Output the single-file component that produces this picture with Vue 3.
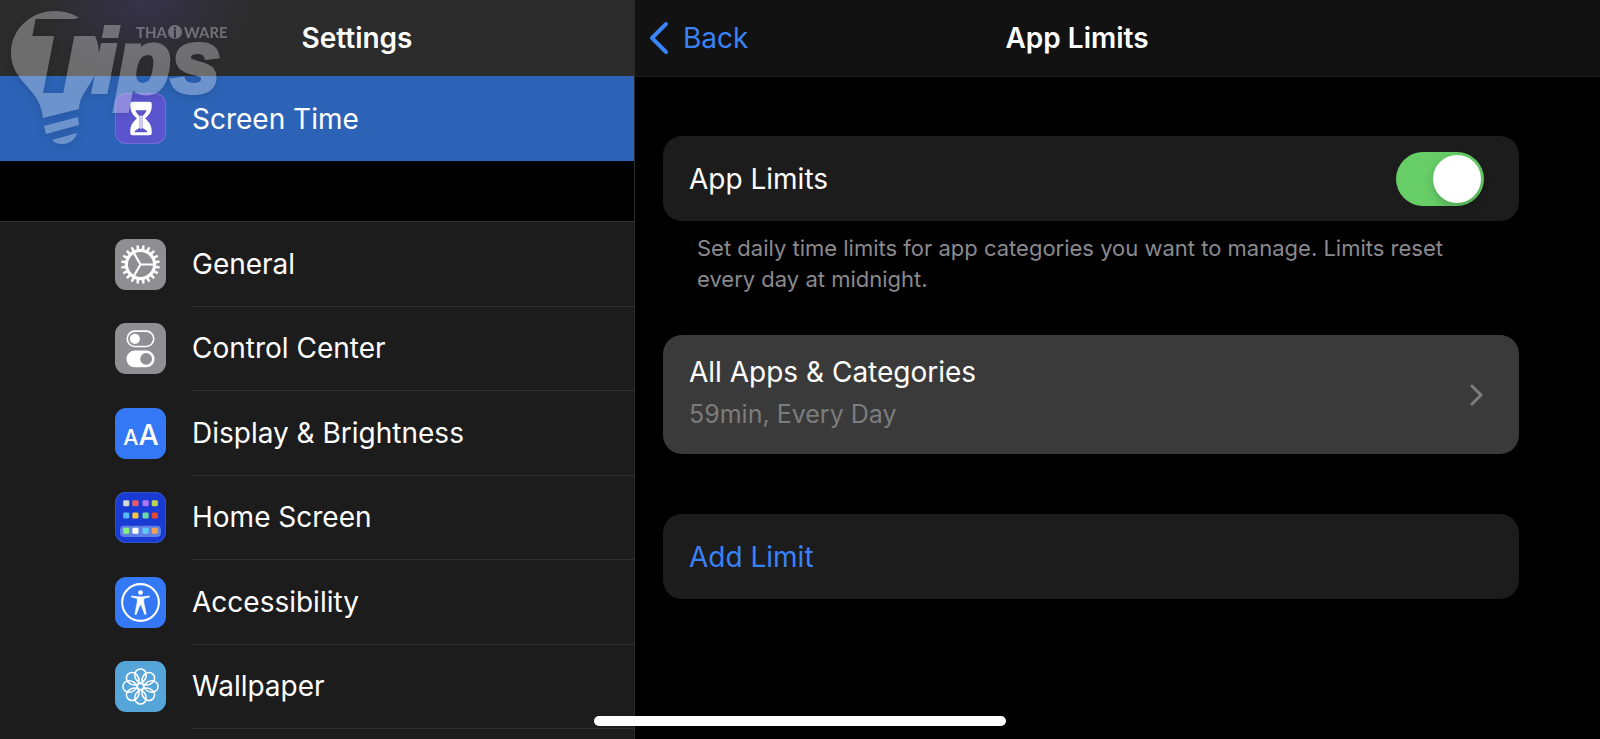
<script setup>
import { ref } from 'vue'

const limitsOn = ref(true)

const items = [
  { id: 'general', label: 'General', tone: 'grey' },
  { id: 'control', label: 'Control Center', tone: 'grey' },
  { id: 'display', label: 'Display & Brightness', tone: 'blue' },
  { id: 'home', label: 'Home Screen', tone: 'navy' },
  { id: 'access', label: 'Accessibility', tone: 'blue' },
  { id: 'wallpaper', label: 'Wallpaper', tone: 'sky' },
]

const teeth = Array.from({ length: 20 }, (_, i) => i * 18 + 9)
const petals = Array.from({ length: 8 }, (_, i) => i * 45)

const tiles = [
  ['#d5d5d3', '#ee5b63', '#b173f2', '#b9d350'],
  ['#56b9f3', '#f8c342', '#6fd9a8', '#ea4631'],
  ['#86ee7c', '#ffffff', '#5dcaf8', '#f2a04e'],
]
const tileRows = [8, 20, 35]
const tileCols = [8, 17, 27, 36]
</script>

<template>
  <div class="screen">
    <aside class="sidebar">
      <header class="bar side-bar">
        <h1 class="title">Settings</h1>
      </header>

      <nav class="menu" aria-label="Settings">
        <a class="row selected" href="#screen-time" aria-current="page">
          <span class="icon violet">
            <svg viewBox="0 0 50 50" aria-hidden="true">
              <path fill="#fff" d="M17 8.500h17a2 2 0 0 1 2 2v2c0 6-2.500 9-6.500 12.500 4 3.500 6.500 6.500 6.500 12.500v2a2 2 0 0 1-2 2H17a2 2 0 0 1-2-2v-2c0-6 2.500-9 6.500-12.500C17.500 21.500 15 18.500 15 12.500v-2a2 2 0 0 1 2-2z" />
              <path fill="#5a55cf" d="M20 17h11c-.8 2.600-2.300 4-4.200 5.800v11.200c1.200 1.600 4 1.500 5.200 4.500H19c1.200-3 4-2.900 5.200-4.500V22.800C22.300 21 20.800 19.600 20 17z" />
              <path stroke="#fff" stroke-width="1.400" d="M25.500 22v13" />
            </svg>
          </span>
          <span class="label">Screen Time</span>
        </a>

        <div class="gap"></div>

        <ul class="list">
          <li v-for="item in items" :key="item.id">
            <a class="row" :href="'#' + item.id">
              <span class="icon" :class="item.tone">
                <svg v-if="item.id === 'general'" viewBox="0 0 50 50" fill="none" stroke="#fff" aria-hidden="true">
                  <circle cx="25" cy="25" r="13.800" stroke-width="3" />
                  <path v-for="a in teeth" :key="a" d="M24 11l.4-4.500h1.200l.4 4.500z" fill="#fff" stroke-width="1" stroke-linejoin="round" :transform="`rotate(${a} 25 25)`" />
                  <path stroke-width="2.200" d="M25 25h13M25 25l-6.500-11.300M25 25l-6.500 11.300" />
                </svg>

                <svg v-else-if="item.id === 'control'" viewBox="0 0 50 50" aria-hidden="true">
                  <rect x="12" y="8" width="26" height="15" rx="7.500" fill="none" stroke="#fff" stroke-width="1.600" />
                  <circle cx="19.500" cy="15.500" r="5" fill="#fff" />
                  <rect x="11.200" y="27" width="27.600" height="16.500" rx="8.250" fill="#fff" />
                  <circle cx="30.500" cy="35.200" r="5.800" fill="#8e8e93" />
                </svg>

                <svg v-else-if="item.id === 'display'" viewBox="0 0 50 50" fill="#fff" aria-hidden="true">
                  <text class="aa" x="8" y="36" font-size="21">A</text>
                  <text class="aa" x="23" y="36" font-size="28">A</text>
                </svg>

                <svg v-else-if="item.id === 'home'" viewBox="0 0 50 50" aria-hidden="true">
                  <rect x="5" y="33" width="40" height="11" rx="3.500" fill="#6180e6" />
                  <template v-for="(line, r) in tiles" :key="r">
                    <rect v-for="(c, i) in line" :key="i" :x="tileCols[i]" :y="tileRows[r]" width="6" height="6" rx="1.300" :fill="c" />
                  </template>
                </svg>

                <svg v-else-if="item.id === 'access'" viewBox="0 0 50 50" aria-hidden="true">
                  <circle cx="25" cy="25" r="18" fill="none" stroke="#fff" stroke-width="2" />
                  <circle cx="25" cy="15.300" r="2.400" fill="#fff" />
                  <path fill="#fff" stroke="#fff" stroke-width=".6" stroke-linejoin="round" d="M16.200 18.600l6 .8h5.600l6-.8v1.100l-5.600 1.300c-.3 3 .2 5 .8 7.500l1.500 8-1.300.3-3.600-9.300h-1.200l-3.600 9.300-1.300-.3 1.500-8c.6-2.500 1.100-4.500.8-7.500l-5.600-1.300z" />
                </svg>

                <svg v-else viewBox="0 0 50 50" fill="none" stroke="#fff" stroke-width="1.500" aria-hidden="true">
                  <path v-for="a in petals" :key="a" d="M25 22c-3-1.500-5.600-5-5.600-8.600a5.600 5.600 0 0 1 11.200 0c0 3.600-2.600 7.100-5.600 8.600z" :transform="`rotate(${a} 25 25)`" />
                  <circle cx="25" cy="25" r="3.200" />
                </svg>
              </span>
              <span class="label">{{ item.label }}</span>
            </a>
          </li>
        </ul>
      </nav>
    </aside>

    <main class="detail">
      <header class="bar detail-bar">
        <button class="back" type="button">
          <svg viewBox="0 0 20 34" aria-hidden="true">
            <path d="M17 3L3 17l14 14" fill="none" stroke="#3a82f7" stroke-width="4" stroke-linecap="round" stroke-linejoin="round" />
          </svg>
          Back
        </button>
        <h2 class="title">App Limits</h2>
      </header>

      <div class="content">
        <section class="group">
          <label class="card toggle-card">
            <span>App Limits</span>
            <input v-model="limitsOn" class="switch" type="checkbox" role="switch" />
          </label>
          <p class="note">Set daily time limits for app categories you want to manage. Limits reset every day at midnight.</p>
        </section>

        <button class="card limit-card" type="button">
          <span class="limit-text">
            <span>All Apps &amp; Categories</span>
            <span class="sub">59min, Every Day</span>
          </span>
          <svg class="chevron" viewBox="0 0 14 22" aria-hidden="true">
            <path d="M2 2l9 9-9 9" fill="none" stroke="#7d7d80" stroke-width="3" stroke-linecap="round" stroke-linejoin="round" />
          </svg>
        </button>

        <button class="card add-card" type="button">Add Limit</button>
      </div>
    </main>

    <svg class="watermark" viewBox="0 0 240 150" role="img" aria-label="Thaiware Tips">
      <defs>
        <mask id="bulb-cut" maskUnits="userSpaceOnUse" x="0" y="0" width="240" height="150">
          <rect width="240" height="150" fill="#fff" />
          <path d="M76 18h28v16H74z" fill="#000" />
          <text class="heavy" x="29" y="90" font-size="98" fill="#000" stroke="#000" stroke-width="6">T</text>
        </mask>
        <mask id="info-cut" maskUnits="userSpaceOnUse" x="160" y="20" width="30" height="24">
          <rect x="160" y="20" width="30" height="24" fill="#fff" />
          <text class="brand" x="175" y="38" font-size="15" text-anchor="middle" fill="#000">i</text>
        </mask>
      </defs>
      <g fill="#fff">
        <path mask="url(#bulb-cut)" d="M55 11C30 11 11 30 11 53c0 11 4 18 9 25 7 9 14 15 18 23 3 6 4 11 5 17l36-9c0-6 2-11 5-16 5-8 9-13 12-21 2-6 3-12 3-18C99 30 80 11 55 11z" />
        <path d="M44 126l34-9 1 8-33 9zM52 140l25-7c-2 7-8 11-14 11-5 0-8-1-11-4z" />
        <text class="heavy" x="92" y="92" font-size="89" stroke="#fff" stroke-width="4">ips</text>
        <text class="brand" x="136" y="38" font-size="15">THA</text>
        <circle mask="url(#info-cut)" cx="175" cy="32" r="7" />
        <text class="brand" x="184" y="38" font-size="15">WARE</text>
      </g>
    </svg>

    <div class="home-indicator"></div>
  </div>
</template>

<style>
html,
body {
  background: #000;
}
</style>

<style scoped>
.screen {
  position: relative;
  display: grid;
  grid-template-columns: minmax(0, 635fr) minmax(0, 965fr);
  min-height: 100vh;
  background: #000;
  color: #fff;
  font-family: Inter, "Liberation Sans", sans-serif;
  font-size: 28px;
  line-height: 34px;
}

.screen *,
.screen *::before {
  box-sizing: border-box;
}

button {
  border: 0;
  padding: 0;
  background: none;
  color: inherit;
  font: inherit;
  text-align: left;
  cursor: pointer;
}

.sidebar {
  display: flex;
  flex-direction: column;
  border-right: 1px solid #2a2a2b;
}

.bar {
  height: 76px;
  display: flex;
  align-items: center;
}

.title {
  margin: 0;
  font-size: 28px;
  font-weight: 600;
}

.side-bar {
  justify-content: center;
  padding-left: 80px;
  background: radial-gradient(ellipse 110px 80px at 145px 0, #36334a, transparent), #2c2c2c;
}

.menu {
  flex: 1;
  display: flex;
  flex-direction: column;
}

.row {
  display: flex;
  align-items: center;
  height: 100%;
  min-height: 84px;
  padding-left: 115px;
  color: #fff;
  text-decoration: none;
}

.selected {
  height: 85px;
  background: #2c63b6;
}

.gap {
  height: 60px;
}

.list {
  flex: 1;
  display: grid;
  grid-auto-rows: 1fr;
  margin: 0;
  padding: 0 0 10px;
  list-style: none;
  background: #1c1c1c;
  border-top: 1px solid #2f2f30;
}

.label {
  flex: 1;
  height: 100%;
  display: flex;
  align-items: center;
  margin-left: 26px;
}

.list .label {
  border-bottom: 1px solid #313132;
}

.icon {
  width: 51px;
  height: 51px;
  border-radius: 11px;
  overflow: hidden;
}

.icon svg {
  display: block;
  width: 51px;
  height: 51px;
}

.violet {
  background: #5a55cf;
  box-shadow: inset 0 0 0 1px #716dd3;
}

.grey {
  background: #8e8e93;
}

.blue {
  background: #3478f6;
}

.navy {
  background: #173bd3;
  box-shadow: inset 0 0 0 1px #3153c9;
}

.sky {
  background: #56a5d8;
}

.aa {
  font-family: Inter, sans-serif;
  font-weight: 500;
}

.detail-bar {
  position: relative;
  height: 77px;
  justify-content: center;
  padding-right: 81px;
  background: #121212;
  border-bottom: 1px solid #1e1e1e;
}

.back {
  position: absolute;
  left: 14px;
  display: flex;
  align-items: center;
  gap: 14px;
  color: #3a82f7;
}

.back svg {
  width: 20px;
  height: 34px;
}

.content {
  display: flex;
  flex-direction: column;
  gap: 60px;
  padding: 59px 81px 59px 28px;
}

.card {
  display: flex;
  align-items: center;
  width: 100%;
  min-height: 85px;
  padding: 0 35px 0 26px;
  border-radius: 19px;
  background: #1c1c1c;
}

.toggle-card {
  justify-content: space-between;
}

.switch {
  appearance: none;
  width: 88px;
  height: 54px;
  margin: 0;
  padding: 3px;
  border-radius: 27px;
  background: #39393d;
  cursor: pointer;
}

.switch::before {
  content: "";
  display: block;
  width: 48px;
  height: 48px;
  border-radius: 50%;
  background: #fff;
  box-shadow: 0 4px 10px rgba(0, 0, 0, 0.2);
}

.switch:checked {
  background: #67ce67;
}

.switch:checked::before {
  margin-left: auto;
}

.note {
  margin: 12px 34px -20px;
  color: #8a8a8e;
  font-size: 22px;
  line-height: 31px;
}

.limit-card {
  justify-content: space-between;
  min-height: 119px;
  background: #3a3a3a;
}

.limit-text {
  display: grid;
  gap: 8px;
  padding-bottom: 3px;
}

.sub {
  color: #7c7c7d;
  font-size: 25px;
}

.chevron {
  width: 14px;
  height: 22px;
}

.add-card {
  color: #3a82f7;
}

.watermark {
  position: absolute;
  top: 0;
  left: 0;
  width: 240px;
  height: 150px;
  opacity: 0.31;
  pointer-events: none;
  filter: drop-shadow(0 2px 4px rgba(0, 0, 0, 0.4));
}

.heavy {
  font-family: "Liberation Sans", sans-serif;
  font-weight: 700;
  font-style: italic;
}

.brand {
  font-family: Lato, sans-serif;
  font-weight: 700;
}

.home-indicator {
  position: absolute;
  bottom: 13px;
  left: 50%;
  width: 412px;
  height: 10px;
  margin-left: -206px;
  border-radius: 5px;
  background: #fff;
}
</style>
